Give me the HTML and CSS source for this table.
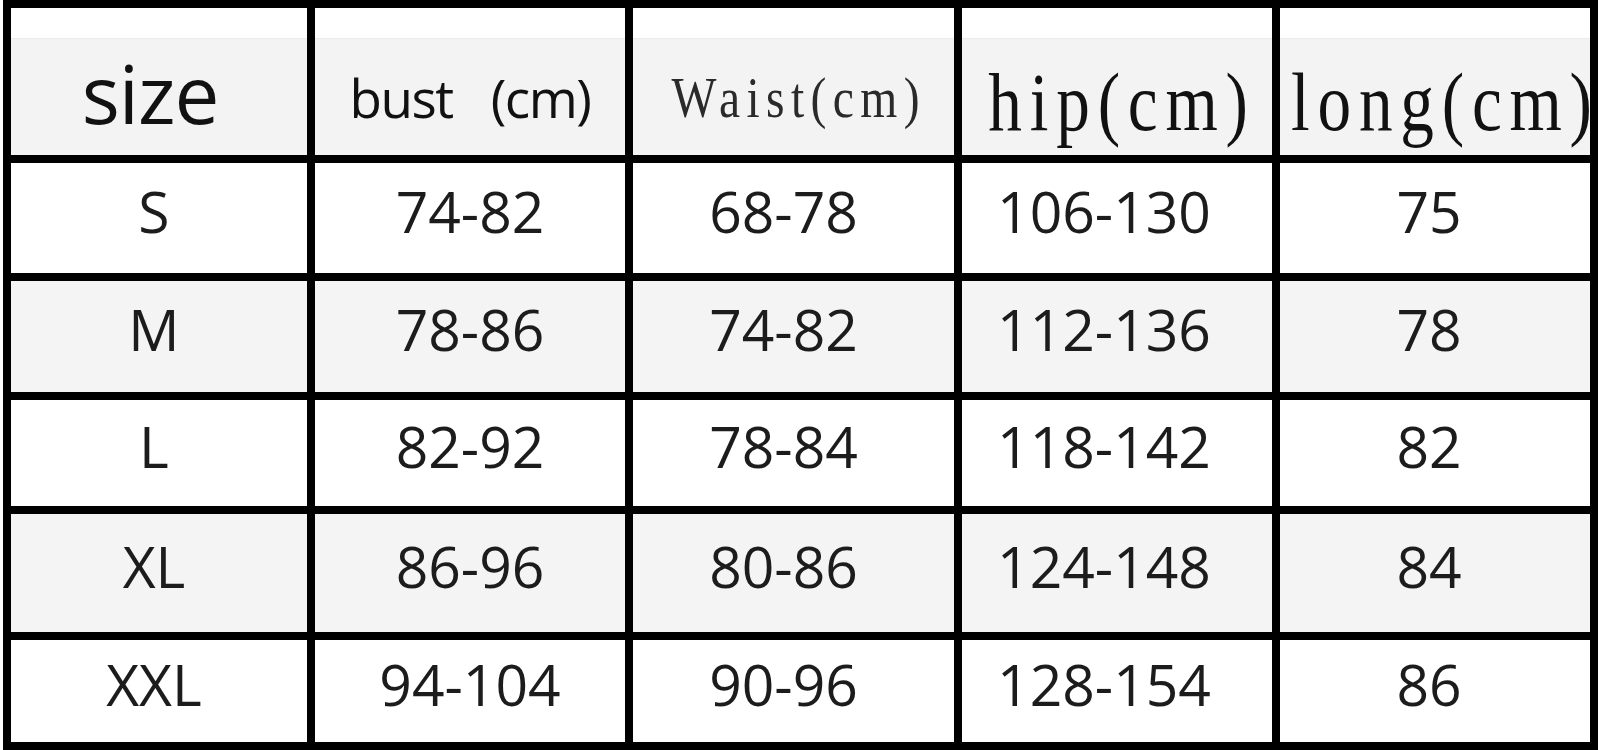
FILE: index.html
```html
<!DOCTYPE html>
<html lang="en">
<head>
<meta charset="utf-8">
<title>Size chart</title>
<link rel="stylesheet" href="styles.css">
</head>
<body>
<div class="chart">
  <div class="cell head c1"><span class="h-size">size</span></div>
  <div class="cell head c2"><span class="h-bust">bust<span class="gap"></span>(cm)</span></div>
  <div class="cell head c3"><span class="h-waist">Waist(cm)</span></div>
  <div class="cell head c4"><span class="h-hip">hip(cm)</span></div>
  <div class="cell head c5"><span class="h-long">long(cm)</span></div>

  <div class="cell c1">S</div>
  <div class="cell c2">74-82</div>
  <div class="cell c3">68-78</div>
  <div class="cell c4">106-130</div>
  <div class="cell c5">75</div>

  <div class="cell alt c1">M</div>
  <div class="cell alt c2">78-86</div>
  <div class="cell alt c3">74-82</div>
  <div class="cell alt c4">112-136</div>
  <div class="cell alt c5">78</div>

  <div class="cell c1">L</div>
  <div class="cell c2">82-92</div>
  <div class="cell c3">78-84</div>
  <div class="cell c4">118-142</div>
  <div class="cell c5">82</div>

  <div class="cell alt c1">XL</div>
  <div class="cell alt c2">86-96</div>
  <div class="cell alt c3">80-86</div>
  <div class="cell alt c4">124-148</div>
  <div class="cell alt c5">84</div>

  <div class="cell c1">XXL</div>
  <div class="cell c2">94-104</div>
  <div class="cell c3">90-96</div>
  <div class="cell c4">128-154</div>
  <div class="cell c5">86</div>
</div>
</body>
</html>
```

FILE: styles.css
```css
html, body {
  margin: 0;
  padding: 0;
  background: #ffffff;
}

body {
  width: 1600px;
  height: 750px;
  overflow: hidden;
}

.chart {
  margin-left: 3px;
  width: 1595px;
  height: 750px;
  box-sizing: border-box;
  background: #000000;
  padding: 8px;
  display: grid;
  grid-template-columns: 296px 310px 321px 310px 310px;
  grid-template-rows: 147px 110px 111px 106px 118px 102px;
  gap: 8px;
}

.cell {
  background: #ffffff;
  display: flex;
  align-items: center;
  justify-content: center;
  padding-bottom: 14px;
  box-sizing: border-box;
  font-family: "Open Sans", "Noto Sans", sans-serif;
  font-size: 57px;
  line-height: 1;
  color: #1c1c1c;
  overflow: visible;
  white-space: pre;
}

.cell.alt {
  background: #f4f4f4;
}

.cell.c1 { padding-right: 10px; }
.cell.c3 { padding-right: 20px; }
.cell.c4 { padding-right: 26px; }
.cell.c5 { padding-right: 12px; }

.cell.head {
  background: linear-gradient(#ffffff 0 30px, #ececec 30px 31px, #f3f3f3 31px);
  align-items: flex-start;
  padding-bottom: 0;
  color: #111111;
}

.head.c1 { padding: 45px 18px 0 0; }
.head.c2 { padding: 63px 0 0 0; }
.head.c3 { padding: 62px 0 0 10px; }
.head.c4 { padding: 54px 0 0 10px; }
.head.c5 { padding: 54px 0 0 11px; justify-content: flex-start; }

.h-size {
  font-family: "Open Sans", sans-serif;
  font-size: 80px;
  line-height: 1;
  letter-spacing: -1px;
}

.h-bust {
  font-family: "Open Sans", sans-serif;
  font-size: 53px;
  line-height: 1;
  letter-spacing: -1.5px;
}

.h-bust .gap {
  display: inline-block;
  width: 38px;
}

.h-waist {
  display: inline-block;
  font-family: "Liberation Serif", serif;
  font-size: 56px;
  line-height: 1;
  letter-spacing: 7.5px;
  color: #2a2a2a;
  transform: scaleX(0.85);
  transform-origin: 50% 50%;
}

.h-hip,
.h-long {
  display: inline-block;
  font-family: "Liberation Serif", serif;
  font-size: 82px;
  line-height: 1;
  letter-spacing: 9.5px;
  transform: scaleX(0.82);
  transform-origin: 50% 50%;
}

.h-long {
  transform-origin: 0 50%;
}
```
